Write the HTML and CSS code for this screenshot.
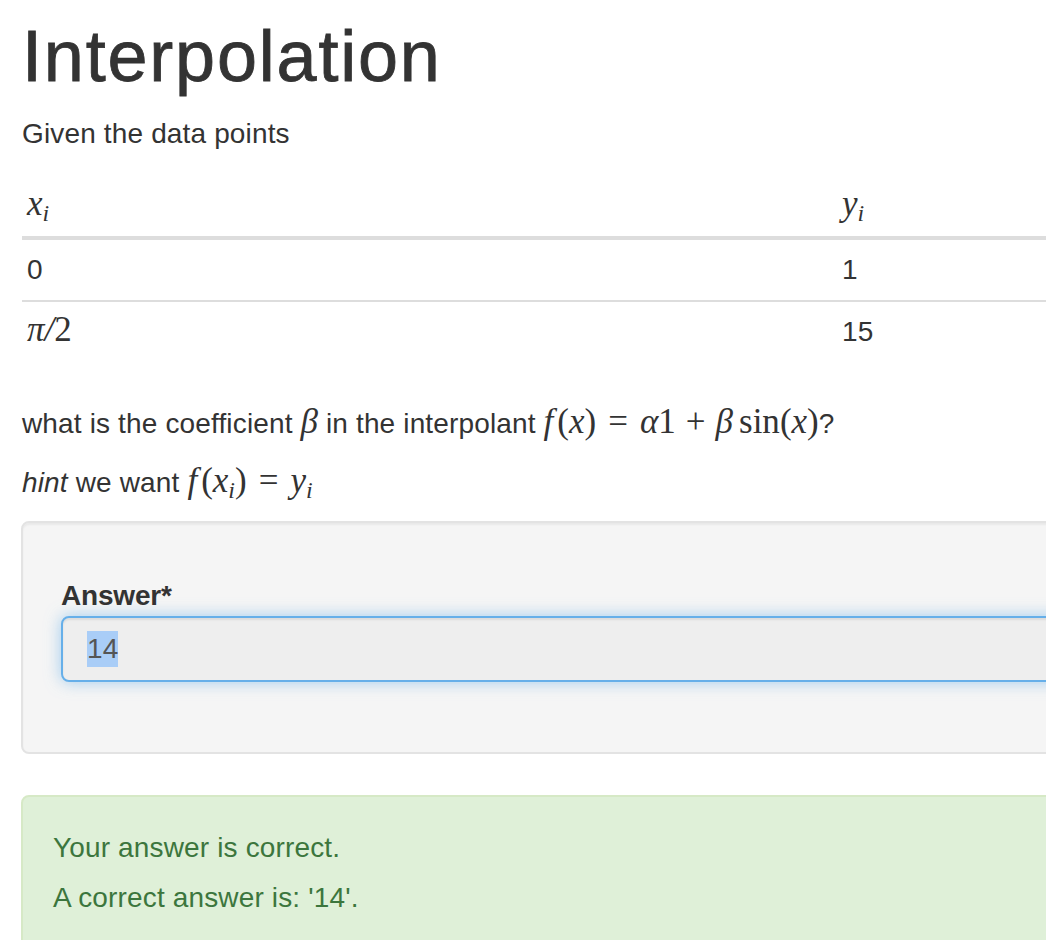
FILE: index.html
```html
<!DOCTYPE html>
<html lang="en">
<head>
<meta charset="utf-8">
<title>Interpolation</title>
<link rel="stylesheet" href="styles.css">
</head>
<body>
<main class="page">
  <h1 class="title">Interpolation</h1>
  <p class="para intro">Given the data points</p>
  <table class="data">
    <thead>
      <tr>
        <th class="col1"><span class="math"><span class="mi">x</span><sub class="sub">i</sub></span></th>
        <th><span class="math"><span class="mi">y</span><sub class="sub">i</sub></span></th>
      </tr>
    </thead>
    <tbody>
      <tr><td>0</td><td>1</td></tr>
      <tr><td><span class="math"><span class="mi">π</span><span class="mi">/</span><span class="mn">2</span></span></td><td>15</td></tr>
    </tbody>
  </table>
  <p class="para question">what is the coefficient <span class="math"><span class="mi">β</span></span> in the interpolant <span class="math"><span class="mi f">f</span><span class="mn">(</span><span class="mi">x</span><span class="mn">)</span><span class="mo rel">=</span><span class="mi">α</span><span class="mn">1</span><span class="mo bin">+</span><span class="mi">β</span><span class="mn fn">sin</span><span class="mn">(</span><span class="mi">x</span><span class="mn">)</span></span>?</p>
  <p class="para hint"><em>hint</em> we want <span class="math"><span class="mi f">f</span><span class="mn">(</span><span class="mi">x</span><sub class="sub">i</sub><span class="mn">)</span><span class="mo rel">=</span><span class="mi">y</span><sub class="sub">i</sub></span></p>
  <section class="well">
    <div class="form-group">
      <label class="label">Answer*</label>
      <div class="input" role="textbox" aria-readonly="true"><span class="selected">14</span></div>
    </div>
  </section>
  <section class="alert">
    <p class="alert-line">Your answer is correct.</p>
    <p class="alert-line">A correct answer is: '14'.</p>
  </section>
</main>
</body>
</html>
```
FILE: styles.css
```css
html, body {
  margin: 0;
  padding: 0;
  overflow: hidden;
  background: #ffffff;
}
body {
  font-family: "Liberation Sans", Arial, Helvetica, sans-serif;
  font-size: 28px;
  line-height: 40px;
  color: #333333;
  letter-spacing: 0.15px;
}
.page {
  width: 1640px;
  padding: 17px 0 0 22px;
}
.title {
  font-size: 72px;
  font-weight: normal;
  line-height: 79px;
  margin: 0 0 18px 0;
  letter-spacing: 1.8px;
  -webkit-text-stroke: 0.8px #333333;
}
.para {
  margin: 0 0 20px 0;
}
.para.intro {
  margin-bottom: 22px;
}
.para.question {
  margin-bottom: 19px;
}
.para.hint {
  margin-bottom: 18px;
}
.data {
  width: 100%;
  border-collapse: collapse;
  margin-bottom: 42px;
}
.data th, .data td {
  text-align: left;
  padding: 10px 5px;
  line-height: 40px;
  height: 40px;
  vertical-align: top;
  font-weight: normal;
}
.data th {
  border-bottom: 4px solid #dddddd;
}
.data td {
  border-top: 2px solid #dddddd;
}
.data .col1 {
  width: 805px;
}
.math {
  font-family: "Liberation Serif", "Times New Roman", serif;
  font-size: 35px;
  line-height: 0;
  letter-spacing: 0;
  white-space: nowrap;
}
.mi {
  font-style: italic;
}
.mn {
  font-style: normal;
}
.f {
  margin-right: 4px;
}
.sub {
  font-style: italic;
  font-size: 24px;
  line-height: 0;
  vertical-align: -6px;
}
.mo.rel {
  margin: 0 12px;
}
.mo.bin {
  margin: 0 10px;
}
.fn {
  margin-left: 6px;
}
.well {
  background: #f5f5f5;
  border: 2px solid #e3e3e3;
  border-radius: 8px;
  box-shadow: inset 0 2px 2px rgba(0, 0, 0, 0.05);
  padding: 53px 0 40px 38px;
  margin: 0 0 41px -1px;
}
.form-group {
  margin-bottom: 30px;
}
.label {
  display: block;
  font-weight: bold;
  line-height: 40px;
  letter-spacing: -0.2px;
}
.input {
  box-sizing: border-box;
  height: 66px;
  display: flex;
  align-items: center;
  padding: 0 24px;
  background: #eeeeee;
  border: 2px solid #66afe9;
  border-radius: 8px;
  box-shadow: inset 0 2px 2px rgba(0, 0, 0, 0.075), 0 0 16px rgba(102, 175, 233, 0.6);
  color: #555555;
}
.selected {
  display: inline-block;
  background: #a9cdf7;
  line-height: 36px;
}
.alert {
  background: #dff0d8;
  border: 2px solid #d6e9c6;
  border-radius: 8px;
  color: #3c763d;
  padding: 31px 30px 30px 30px;
  margin-left: -1px;
  height: 300px;
}
.alert-line {
  margin: 0 0 10px 0;
}
```
